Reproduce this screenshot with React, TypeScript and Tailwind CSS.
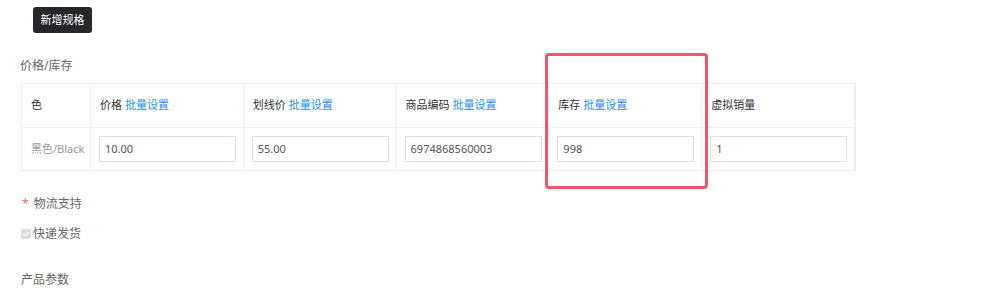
import React from "react";

const font = { fontFamily: '"Noto Sans", "Noto Sans CJK SC", sans-serif' };

function HeadCell({ label, link, first }: { label: string; link?: boolean; first?: boolean }) {
  return (
    <div
      className={`flex items-center h-[43px] border-r border-[#f0f0f0] ${first ? "w-[69px] pl-[9px]" : "w-[153px] pl-[9px]"} text-[11px] text-[#333]`}
    >
      <span>{label}</span>
      {link && <span className="ml-[3px] text-[#2d8cf0]">批量设置</span>}
    </div>
  );
}

function InputCell({ value }: { value: string }) {
  return (
    <div className="flex items-center h-[42px] w-[153px] pl-[8px] border-r border-[#f0f0f0]">
      <div className="w-[137px] h-[26px] border border-[#dcdfe6] flex items-center pl-[5px] text-[11px] text-[#555]">
        {value}
      </div>
    </div>
  );
}

export default function App() {
  const cols = [
    { label: "价格", link: true, value: "10.00" },
    { label: "划线价", link: true, value: "55.00" },
    { label: "商品编码", link: true, value: "6974868560003" },
    { label: "库存", link: true, value: "998" },
    { label: "虚拟销量", link: false, value: "1" },
  ];
  return (
    <div className="w-[1000px] h-[295px] bg-white overflow-hidden" style={font}>
      <div className="pt-[7px] pl-[33px]">
        <button className="h-[26px] w-[59px] rounded-[3px] bg-[#27272b] text-white text-[11px] flex items-center justify-center">
          新增规格
        </button>
      </div>
      <div className="pl-[20px] mt-[25px] text-[12px] text-[#666] leading-[16px]">价格/库存</div>
      <div className="relative ml-[21px] mt-[9px] w-[835px]">
        <div className="border border-[#f0f0f0]">
          <div className="flex border-b border-[#f0f0f0]">
            <HeadCell label="色" first />
            {cols.map((c, i) => (
              <HeadCell key={i} label={c.label} link={c.link} />
            ))}
          </div>
          <div className="flex">
            <div className="flex items-center h-[42px] w-[69px] pl-[9px] border-r border-[#f0f0f0] text-[11px] text-[#999] whitespace-nowrap">
              黑色/Black
            </div>
            {cols.map((c, i) => (
              <InputCell key={i} value={c.value} />
            ))}
          </div>
        </div>
        <div className="absolute left-[524px] top-[-30px] w-[163px] h-[136px] border-[3px] border-[#f5566a] rounded-[4px]" />
      </div>
      <div className="pl-[22px] mt-[25px] flex items-center text-[12px] text-[#666] leading-[16px]">
        <span className="text-[#f56c6c] mr-[5px]">*</span>
        <span>物流支持</span>
      </div>
      <div className="pl-[21px] mt-[14px] flex items-center text-[12px] text-[#666] leading-[16px]">
        <span className="w-[10px] h-[10px] bg-[#dcdcdc] rounded-[2px] flex items-center justify-center mr-[2px]">
          <svg width="8" height="8" viewBox="0 0 8 8">
            <path d="M1.2 4.2 L3.2 6 L6.8 1.8" stroke="#f5f5f5" strokeWidth="1.3" fill="none" />
          </svg>
        </span>
        <span>快递发货</span>
      </div>
      <div className="pl-[21px] mt-[30px] text-[12px] text-[#666] leading-[16px]">产品参数</div>
    </div>
  );
}
